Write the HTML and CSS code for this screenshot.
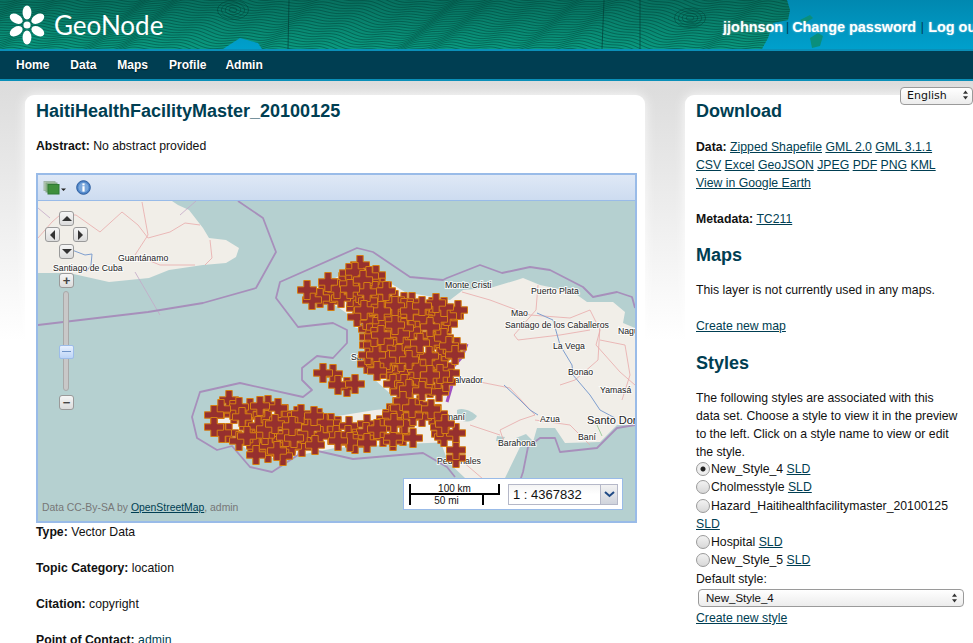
FILE: index.html
```html
<!DOCTYPE html>
<html lang="en">
<head>
  <meta charset="UTF-8">
  <title>HaitiHealthFacilityMaster_20100125 - GeoNode</title>
  <link rel="stylesheet" href="styles.css">
</head>
<body>

<div class="header">
  <svg class="header-art" id="headerArt" width="1000" height="49" viewBox="0 0 1000 49"></svg>
  <a class="logo" href="#">
    <svg width="46" height="46" viewBox="-23 -23 46 46">
      <g fill="#fff">
        <circle r="3.6"/>
        <ellipse cy="-12.5" rx="4.4" ry="7"/>
        <ellipse cy="-12.5" rx="4.4" ry="7" transform="rotate(60)"/>
        <ellipse cy="-12.5" rx="4.4" ry="7" transform="rotate(120)"/>
        <ellipse cy="-12.5" rx="4.4" ry="7" transform="rotate(180)"/>
        <ellipse cy="-12.5" rx="4.4" ry="7" transform="rotate(240)"/>
        <ellipse cy="-12.5" rx="4.4" ry="7" transform="rotate(300)"/>
      </g>
    </svg>
    <span class="logo-text">GeoNode</span>
  </a>
  <div class="user-links">
    <a href="#">jjohnson</a>
    <span class="sep">|</span>
    <a href="#">Change password</a>
    <span class="sep">|</span>
    <a href="#">Log out</a>
  </div>
</div>

<div class="nav">
  <a href="#">Home</a>
  <a href="#">Data</a>
  <a href="#">Maps</a>
  <a href="#">Profile</a>
  <a class="nav-last" href="#">Admin</a>
</div>

<div class="lang-select">
  <select>
    <option>English</option>
  </select>
  <svg class="updown" width="7" height="10" viewBox="0 0 7 10"><path d="M3.5 0.5 6 3.8H1zM3.5 9.5 6 6.2H1z" fill="#333"/></svg>
</div>

<div class="content">
  <div class="card card-main">
    <h2>HaitiHealthFacilityMaster_20100125</h2>
    <p class="abstract"><b>Abstract:</b> No abstract provided</p>

    <div class="map-frame">
      <div class="map-toolbar">
        <svg class="layers-icon" width="24" height="14" viewBox="0 0 24 14">
          <rect x="1" y="0.5" width="11" height="9" fill="#b9cdb4" stroke="#9fb5a8"/>
          <rect x="3" y="2" width="11" height="9" fill="#8db587" stroke="#86a68a"/>
          <rect x="5" y="3.5" width="11" height="9.5" fill="#3f8f3c" stroke="#2f7a35"/>
          <path d="M18 7.5h5l-2.5 2.5z" fill="#222"/>
        </svg>
        <svg class="info-icon" width="15" height="15" viewBox="0 0 15 15">
          <circle cx="7.5" cy="7.5" r="6.8" fill="#4f86c9" stroke="#2c5c9e"/>
          <circle cx="7.5" cy="7.5" r="5" fill="#7aa7dc"/>
          <rect x="6.4" y="6.2" width="2.2" height="5.4" fill="#fff"/>
          <rect x="6.4" y="3.4" width="2.2" height="2" fill="#fff"/>
        </svg>
      </div>

      <div class="map">
        <svg class="map-art" width="597" height="320" viewBox="38 201 597 320">
          <rect x="38" y="201" width="597" height="320" fill="#b5d0d0"/>

          <g fill="#f1eee8">
            <path d="M38 201H172L178 205 189 210 203 228 209 238 226 240 239 248 236 257 226 263 203 265 169 270 149 278 109 282 69 273 38 273Z"/>
            <path d="M463 290 490 288 517 280 523 278 540 285 573 292 587 302 613 302 625 312 623 323 635 328V425H617L600 442 565 443 555 428 537 428 533 442 520 447 505 478H465L448 462 440 440 420 400 445 340 450 300Z"/>
            <path d="M312 290 360 265 405 292 450 300 462 320 458 395 435 400 395 398 375 380 362 345 365 330 345 312Z"/>
            <path d="M212 418 228 402 270 408 325 418 375 410 430 405 445 425 455 442 400 444 335 448 285 458 255 458 235 438Z"/>
            <path d="M328 372 356 384 348 392 330 384Z"/>
          </g>
          <path d="M457 410C464 407 472 412 477 416 473 423 462 423 457 418Z" fill="#b5d0d0"/>
          <path d="M497 436 505 437 502 442 496 441ZM516 438 526 434 533 441 520 445Z" fill="#b5d0d0"/>

          <g fill="none" stroke="#e9a9aa" stroke-width="0.8">
            <path d="M38 238 52 222 60 215 76 215 100 232 122 212 138 225 148 238 170 232 185 223 200 225M142 202 148 235 135 255 160 265 195 265M210 240 212 258 205 265"/>
            <path d="M462 292 490 300 530 315 570 318 590 310 600 330 596 345 620 372 635 385M538 285 536 310 514 335 518 340 560 335 590 330M600 325 598 360 575 380 560 385M470 380 510 388 535 415 520 420 500 430 505 445M535 420 570 425 590 445M470 425 500 435M600 340 625 345 630 375 622 400M455 455 490 485"/>
          </g>
          <g fill="none" stroke="#c4a8c8" stroke-width="0.8">
            <path d="M38 208 50 218M135 272 160 315M196 201 180 215"/>
          </g>
          <g fill="none" stroke="#7f9fcf" stroke-width="1">
            <path d="M72 250 85 255 92 254 91 265 86 272M537 313 553 320 560 345 572 365 573 375 590 395 600 410 615 418M504 385 520 400 530 410 538 415"/>
          </g>
          <path d="M597 425 602 436" stroke="#8dc68d" stroke-width="0.8" fill="none"/>

          <g fill="none" stroke="#a78fbb" stroke-width="1.8" stroke-linejoin="round">
            <path d="M238 201 263 218 276 252 256 288 203 303 148 312 38 325"/>
            <path d="M455 477 447 467 423 453 353 459 300 447 298 455 272 472 250 467 232 446 217 450 197 438 192 417 200 392 240 383 303 397 312 390 302 380 302 368 317 356 333 358 347 343 347 330 333 323 298 327 276 298 280 282 357 248 373 252 410 277 443 280 447 278 480 265 502 273 530 267 550 270 583 287 593 297 617 292 632 297 635 308"/>
            <path d="M635 425 617 428 597 448 560 452 555 438 540 438 528 447 523 472 517 490"/>
            <path d="M467 344 462 357 453 367M452 385 447 402" stroke="#a04fc0" stroke-width="3"/>
          </g>

          <g class="map-label">
            <text x="53" y="271">Santiago de Cuba</text>
            <text x="118" y="261">Guantánamo</text>
            <text x="445" y="288">Monte Cristi</text>
            <text x="531" y="294">Puerto Plata</text>
            <text x="511" y="316">Mao</text>
            <text x="505" y="328">Santiago de los Caballeros</text>
            <text x="618" y="334">Nagua</text>
            <text x="553" y="349">La Vega</text>
            <text x="568" y="375">Bonao</text>
            <text x="600" y="393">Yamasá</text>
            <text x="540" y="422">Azua</text>
            <text x="578" y="440">Baní</text>
            <text x="498" y="446">Barahona</text>
            <text x="437" y="464">Pedernales</text>
            <text x="483" y="383" text-anchor="end">Salvador</text>
            <text x="465" y="420" text-anchor="end">Jimaní</text>
            <text x="354" y="327">Cap</text>
            <text x="351" y="360">Saint</text>
            <text class="map-label-big" x="587" y="424">Santo Domingo</text>
          </g>

          <g id="crosses"></g>
        </svg>

        <div class="pan-btn pan-up"><span class="tri tri-up"></span></div>
        <div class="pan-btn pan-left"><span class="tri tri-left"></span></div>
        <div class="pan-btn pan-right"><span class="tri tri-right"></span></div>
        <div class="pan-btn pan-down"><span class="tri tri-down"></span></div>
        <div class="pan-btn zoom-in">+</div>
        <div class="zoom-track"></div>
        <div class="zoom-handle"></div>
        <div class="pan-btn zoom-out">&minus;</div>

        <div class="attribution">Data CC-By-SA by <a href="#">OpenStreetMap</a>, admin</div>

        <div class="scale-box">
          <div class="scale-lines">
            <span class="scale-top">100 km</span>
            <span class="scale-bottom">50 mi</span>
          </div>
          <div class="scale-combo">
            <span class="scale-value">1 : 4367832</span>
            <span class="scale-trigger">
              <svg width="11" height="7" viewBox="0 0 11 7"><path d="M1 1 5.5 5 10 1" fill="none" stroke="#1f4a85" stroke-width="2"/></svg>
            </span>
          </div>
        </div>
      </div>
    </div>

    <p><b>Type:</b> Vector Data</p>
    <p><b>Topic Category:</b> location</p>
    <p><b>Citation:</b> copyright</p>
    <p><b>Point of Contact:</b> <a class="plain" href="#">admin</a></p>
  </div>

  <div class="card card-side">
    <h2>Download</h2>
    <p class="links"><b>Data:</b> <a href="#">Zipped Shapefile</a> <a href="#">GML 2.0</a> <a href="#">GML 3.1.1</a><br><a href="#">CSV</a> <a href="#">Excel</a> <a href="#">GeoJSON</a> <a href="#">JPEG</a> <a href="#">PDF</a> <a href="#">PNG</a> <a href="#">KML</a><br><a href="#">View in Google Earth</a></p>
    <p><b>Metadata:</b> <a href="#">TC211</a></p>

    <h2 class="maps-title">Maps</h2>
    <p>This layer is not currently used in any maps.</p>
    <p><a href="#">Create new map</a></p>

    <h2 class="styles-title">Styles</h2>
    <p class="styles-intro">The following styles are associated with this data set. Choose a style to view it in the preview to the left. Click on a style name to view or edit the style.</p>

    <div class="style-list">
      <label><input type="radio" name="style" checked>New_Style_4</label> <a href="#">SLD</a><br>
      <label><input type="radio" name="style">Cholmesstyle</label> <a href="#">SLD</a><br>
      <label><input type="radio" name="style">Hazard_Haitihealthfacilitymaster_20100125</label> <a href="#">SLD</a><br>
      <label><input type="radio" name="style">Hospital</label> <a href="#">SLD</a><br>
      <label><input type="radio" name="style">New_Style_5</label> <a href="#">SLD</a><br>
      Default style:
      <div class="default-select">
        <select>
          <option>New_Style_4</option>
        </select>
        <svg class="updown" width="7" height="10" viewBox="0 0 7 10"><path d="M3.5 0.5 6 3.8H1zM3.5 9.5 6 6.2H1z" fill="#333"/></svg>
      </div>
      <a href="#">Create new style</a>
    </div>
  </div>
</div>

<script src="script.js"></script>
</body>
</html>
```

FILE: styles.css
```css
html {
  overflow: hidden;
}

body {
  font-family: "Liberation Sans", Arial, sans-serif;
  font-size: 12.25px;
  line-height: 18px;
  color: #111;
  margin: 0;
  padding: 0;
  background: #fff linear-gradient(#dcdcdc, #fff) no-repeat 0 81px / 100% 260px;
  width: 1000px;
  position: relative;
}

a {
  color: #003e52;
}

p {
  margin: 0 0 18px;
}

h2 {
  font-size: 18px;
  line-height: 22px;
  font-weight: bold;
  color: #003e52;
  margin: 0 0 16px;
}

/* header */
.header {
  height: 49px;
  position: relative;
  display: flex;
  align-items: center;
  padding: 0 19px 0 4px;
  background: linear-gradient(#0088b0, #00a0cc);
}

.header-art {
  position: absolute;
  left: 0;
  top: 0;
}

.logo {
  position: relative;
  display: flex;
  align-items: center;
  gap: 4px;
  color: #fff;
  text-decoration: none;
}

.logo-text {
  font-family: Lato, "Open Sans", sans-serif;
  font-size: 26px;
  line-height: 36px;
}

.user-links {
  position: relative;
  margin-left: auto;
  display: flex;
  gap: 3px;
  font-size: 14.4px;
  font-weight: bold;
  padding-top: 5px;
}

.user-links a {
  color: #fff;
  text-decoration: none;
  text-shadow: 0 0 2px rgba(255, 255, 255, 0.5);
}

.user-links .sep {
  color: #003e52;
  font-weight: normal;
  font-size: 12px;
}

.user-links .sep:last-of-type {
  margin: 0 1.5px;
}

.nav {
  display: flex;
  gap: 21px;
  height: 28px;
  padding-left: 16px;
  align-items: center;
  background-color: #003e52;
  border-top: 2px solid #0a8fb8;
  border-bottom: 2px solid #0a8fb8;
  font-size: 12px;
}

.nav a {
  color: #fff;
  font-weight: bold;
  text-decoration: none;
  text-shadow: 0 1px 1px rgba(0, 0, 0, 0.6);
}

.nav .nav-last {
  margin-left: -2px;
}

.lang-select {
  position: absolute;
  left: 900px;
  top: 86px;
  width: 73px;
  height: 18px;
  z-index: 5;
}

.lang-select select,
.default-select select {
  appearance: none;
  width: 100%;
  height: 100%;
  border: 1px solid #9a9a9a;
  border-radius: 4px;
  background: linear-gradient(#fff, #ececec);
  font-family: "Lucida Grande", "DejaVu Sans", sans-serif;
  font-size: 11px;
  color: #111;
  padding: 0 0 0 6px;
  margin: 0;
}

.updown {
  position: absolute;
  right: 4px;
  top: 4px;
}

/* cards */
.content {
  display: flex;
  gap: 40px;
  padding: 14px 0 0 25px;
  align-items: flex-start;
}

.card {
  background-color: #fff;
  border-radius: 9px 9px 0 0;
  box-shadow: 0 0 12px rgba(255, 255, 255, 0.9);
  padding-top: 5px;
  min-height: 560px;
}

.card-main {
  width: 620px;
  box-sizing: border-box;
  padding-left: 11px;
  padding-right: 8px;
}

.card-side {
  width: 300px;
  box-sizing: border-box;
  padding-left: 11px;
  padding-right: 26px;
}

/* negative top margins: they add to the 18px of the paragraph above */
.card-side .maps-title {
  margin-top: -2px;
  margin-bottom: 15px;
}

.card-side .styles-title {
  margin-top: -1px;
  margin-bottom: 15px;
}

.card-side .styles-intro {
  margin-bottom: 0;
}

.abstract {
  margin-top: 15px;
  margin-bottom: 18px;
}

/* map */
.card-main h2 {
  margin-bottom: 14px;
}

.map-frame {
  border: 2px solid #99bbe8;
}

.map-toolbar {
  height: 25px;
  display: flex;
  align-items: center;
  gap: 9px;
  padding-left: 5px;
  background: linear-gradient(#dfe8f6, #cddcf0);
  border-bottom: 1px solid #99bbe8;
}

.map {
  position: relative;
  width: 597px;
  height: 320px;
  overflow: hidden;
}

.map-art {
  display: block;
}

.map-label text {
  font-family: "Liberation Sans", sans-serif;
  font-size: 8.7px;
  fill: #222;
  stroke: #fff;
  stroke-width: 2px;
  stroke-opacity: 0.8;
  paint-order: stroke;
}

.map-label .map-label-big {
  font-size: 11px;
}

.pan-btn {
  position: absolute;
  width: 13px;
  height: 13px;
  background: linear-gradient(#f6f6f6, #dcdcdc);
  border: 1px solid #9a9a9a;
  border-radius: 3px;
  display: flex;
  align-items: center;
  justify-content: center;
  font: bold 13px/13px "Liberation Sans", sans-serif;
  color: #444;
}

.pan-up { left: 21px; top: 10px; }
.pan-left { left: 7px; top: 26px; }
.pan-right { left: 35px; top: 26px; }
.pan-down { left: 21px; top: 43px; }
.zoom-in { left: 21px; top: 72px; }
.zoom-out { left: 21px; top: 194px; }

.tri {
  width: 0;
  height: 0;
  border-style: solid;
  border-color: transparent;
}

.tri-up { border-width: 0 5px 5px; border-bottom-color: #333; }
.tri-down { border-width: 5px 5px 0; border-top-color: #333; }
.tri-left { border-width: 5px 5px 5px 0; border-right-color: #333; }
.tri-right { border-width: 5px 0 5px 5px; border-left-color: #333; }

.zoom-track {
  position: absolute;
  left: 25px;
  top: 90px;
  width: 4px;
  height: 98px;
  background-color: #c8c8c8;
  border: 1px solid #a9a9a9;
  border-radius: 3px;
}

.zoom-handle {
  position: absolute;
  left: 21px;
  top: 144px;
  width: 13px;
  height: 12px;
  background: linear-gradient(#e8f1ff, #bcd4f6);
  border: 1px solid #9cbce8;
  border-radius: 2px;
}

.zoom-handle::after {
  content: "";
  display: block;
  margin: 5px 2px 0;
  height: 1px;
  background-color: #6f94c8;
}

.attribution {
  position: absolute;
  left: 4px;
  bottom: 4px;
  font-size: 10.4px;
  line-height: 18px;
  color: #777;
}

.scale-box {
  position: absolute;
  left: 365px;
  top: 277px;
  width: 213px;
  height: 30px;
  display: flex;
  align-items: center;
  gap: 10px;
  padding-left: 5px;
  background-color: #fff;
  border: 1px solid #99bbe8;
}

.scale-lines {
  position: relative;
  width: 89px;
  height: 21px;
  flex: none;
  font-size: 10px;
  line-height: 10px;
  color: #111;
}

.scale-top {
  position: absolute;
  left: 0;
  top: 0;
  width: 87px;
  height: 9px;
  border: solid #000;
  border-width: 0 2px 2px;
  text-align: center;
}

.scale-bottom {
  position: absolute;
  left: 0;
  top: 10px;
  width: 71px;
  height: 11px;
  line-height: 14px;
  border: solid #000;
  border-width: 0 2px;
  text-align: center;
}

.scale-combo {
  display: flex;
  width: 108px;
  height: 19px;
  border: 1px solid #b5b8c8;
  background: linear-gradient(#f4f4f4, #fff 50%);
}

.scale-value {
  flex: 1;
  padding-left: 4px;
  font-size: 13px;
  line-height: 19px;
  color: #111;
}

.scale-trigger {
  width: 16px;
  display: flex;
  align-items: center;
  justify-content: center;
  background: linear-gradient(#f2f2f2, #cfd3dc);
  border-left: 1px solid #b5b8c8;
}

/* styles list */
.style-list {
  margin-top: -1px;
  line-height: 18.3px;
}

.style-list input {
  appearance: none;
  width: 14px;
  height: 14px;
  margin: 0 1px 0 0;
  vertical-align: -3px;
  border: 1px solid #9a9a9a;
  border-radius: 50%;
  background: linear-gradient(#f2f2f2, #d8d8d8);
}

.style-list input:checked {
  background: radial-gradient(circle, #222 2px, #eee 3px);
}

.default-select {
  position: relative;
  width: 266px;
  height: 18px;
  margin: 1px 0 2px 2px;
}

.default-select select {
  font-family: "Liberation Sans", sans-serif;
  font-size: 11.5px;
  padding-left: 7px;
}

.default-select .updown {
  right: 6px;
}
```

FILE: script.js
```js
// seeded so the picture comes out the same every time
let seed = 7;
function rnd() {
  seed = (seed * 16807) % 2147483647;
  return seed / 2147483647;
}

const svgNs = "http://www.w3.org/2000/svg";

function add(parent, name, attrs) {
  const el = document.createElementNS(svgNs, name);
  for (const key in attrs) {
    el.setAttribute(key, attrs[key]);
  }
  parent.appendChild(el);
  return el;
}

/* header contours */
const headerArt = document.getElementById("headerArt");
const coast = "M0 0H787L790 10 788 20 773 23 768 38 762 49H262L258 43 240 38 223 49H0Z";
const defs = add(headerArt, "defs", {});
const grad = add(defs, "linearGradient", { id: "seaGrad", x1: 0, y1: 0, x2: 0, y2: 1 });
add(grad, "stop", { offset: 0, "stop-color": "#07705f" });
add(grad, "stop", { offset: 1, "stop-color": "#0a9a80" });
const clip = add(defs, "clipPath", { id: "landClip" });
add(clip, "path", { d: coast });
add(headerArt, "path", { d: coast, fill: "url(#seaGrad)" });
add(headerArt, "path", { d: "M810 38 818 33 823 36 820 46 812 48Z", fill: "#0a8f7c" });
add(headerArt, "path", { d: "M800 20 810 15 813 18 804 24Z", fill: "#0a8f7c" });

const contours = add(headerArt, "g", {
  "clip-path": "url(#landClip)",
  fill: "none",
  stroke: "#033f36",
  "stroke-width": 0.7,
  "stroke-opacity": 0.7
});

for (let i = 0; i < 30; i++) {
  const base = -12 + i * 2.5;
  let d = "";
  for (let x = 0; x <= 800; x += 3) {
    const y = base
      + 6 * Math.sin(x / 60 + 0.6 + i * 0.06)
      + 4 * Math.sin(x / 23 + 1.7 + i * 0.11)
      + 1.5 * Math.sin(x / 7 + i * 0.4);
    d += (x === 0 ? "M" : "L") + x + " " + y.toFixed(1);
  }
  add(contours, "path", { d: d });
}

// hills
const hills = [[233, 10], [690, 18]];
hills.forEach(function(h) {
  for (let r = 3; r < 15; r += 3) {
    add(contours, "ellipse", { cx: h[0], cy: h[1], rx: r * 1.3, ry: r * 0.8 });
  }
});
add(contours, "path", { d: "M289 0 288 49M604 0 602 49M640 0V49", "stroke-width": 1 });

/* crosses on the map */
const crosses = document.getElementById("crosses");

// areas for the centre of a cross
const areas = [
  [[310,291],[325,282],[360,267],[377,275],[400,295],[445,303],[459,322],[450,335],[458,345],[455,365],[452,380],[440,395],[400,392],[390,385],[382,375],[362,365],[364,345],[362,325],[345,305],[320,300]],
  [[212,414],[228,399],[270,405],[287,409],[310,413],[333,421],[367,423],[380,411],[395,405],[407,398],[433,405],[443,420],[457,433],[453,440],[440,437],[403,440],[363,445],[330,444],[285,452],[258,458],[235,442],[210,427]]
];

// bits of land left showing
const holes = [[225,422,5],[240,426,5],[415,426,5],[428,428,5],[360,302,1],[392,378,2],[420,334,1],[345,405,1],[420,355,1],[355,425,1]];

const extra = [
  [323,373],[333,374],[338,385],[347,387],[355,384],[456,450],[456,458],[283,456],
  [360,265],[307,290],[312,300],[458,310]
];

function inside(poly, x, y) {
  let hit = false;
  for (let i = 0, j = poly.length - 1; i < poly.length; j = i++) {
    const a = poly[i];
    const b = poly[j];
    if ((a[1] > y) !== (b[1] > y) && x < (b[0] - a[0]) * (y - a[1]) / (b[1] - a[1]) + a[0]) {
      hit = !hit;
    }
  }
  return hit;
}

function inHole(x, y) {
  return holes.some(function(h) {
    return Math.hypot(x - h[0], y - h[1]) < h[2] + 4;
  });
}

function cross(x, y) {
  const a = 9.5;
  const t = 3.2;
  const pts = [
    [-t,-a],[t,-a],[t,-t],[a,-t],[a,t],[t,t],[t,a],[-t,a],[-t,t],[-a,t],[-a,-t],[-t,-t]
  ].map(function(p) { return (x + p[0]).toFixed(1) + "," + (y + p[1]).toFixed(1); });
  add(crosses, "polygon", { points: pts.join(" "), fill: "#96302e", stroke: "#d57f12", "stroke-width": 1 });
}

const centres = extra.slice();
areas.forEach(function(poly) {
  for (let y = 255; y < 470; y += 9) {
    for (let x = 195; x < 475; x += 9) {
      const px = Math.round(x + rnd() * 6 - 3);
      const py = Math.round(y + rnd() * 6 - 3);
      if (inside(poly, px, py) && !inHole(px, py)) {
        centres.push([px, py]);
      }
    }
  }
});

// shuffle a little, so the outlines overlap the way they do on a real layer
centres.sort(function() { return rnd() - 0.5; });
centres.forEach(function(c) { cross(c[0], c[1]); });
```
